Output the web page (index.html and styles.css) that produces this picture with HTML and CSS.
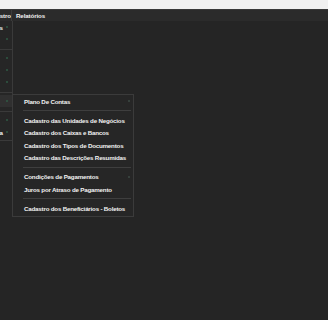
FILE: index.html
```html
<!DOCTYPE html>
<html lang="pt">
<head>
<meta charset="utf-8">
<link rel="stylesheet" href="styles.css">
</head>
<body>
<div class="topbar"></div>
<nav class="menubar">
  <div class="mitem clip"><span>Cadastro</span></div>
  <div class="mitem">Relatórios</div>
</nav>
<div class="workspace">
  <div class="dropdown">
    <div class="drow"><span class="dtext">Cadastros</span><span class="arr"></span></div>
    <div class="drow"><span class="dtext"></span><span class="arr"></span></div>
    <div class="dsep"></div>
    <div class="drow"><span class="dtext"></span><span class="arr"></span></div>
    <div class="drow"><span class="dtext"></span><span class="arr"></span></div>
    <div class="drow"><span class="dtext"></span><span class="arr"></span></div>
    <div class="dsep"></div>
    <div class="drow active"><span class="dtext"></span><span class="arr"></span></div>
    <div class="dsep"></div>
    <div class="drow"><span class="dtext"></span><span class="arr"></span></div>
    <div class="drow"><span class="dtext">Financeira</span><span class="arr"></span></div>
  </div>
  <div class="submenu">
    <div class="srow"><span>Plano De Contas</span><span class="sarr"></span></div>
    <div class="ssep"></div>
    <div class="srow"><span>Cadastro das Unidades de Negócios</span></div>
    <div class="srow"><span>Cadastro dos Caixas e Bancos</span></div>
    <div class="srow"><span>Cadastro dos Tipos de Documentos</span></div>
    <div class="srow"><span>Cadastro das Descrições Resumidas</span></div>
    <div class="ssep"></div>
    <div class="srow"><span>Condições de Pagamentos</span><span class="sarr"></span></div>
    <div class="srow"><span>Juros por Atraso de Pagamento</span></div>
    <div class="ssep"></div>
    <div class="srow"><span>Cadastro dos Beneficiários - Boletos</span></div>
  </div>
</div>
</body>
</html>
```
FILE: styles.css
```css
html, body {
  margin: 0;
  padding: 0;
}
body {
  width: 328px;
  height: 320px;
  background: #252525;
  font-family: "Liberation Sans", Arial, sans-serif;
  font-weight: bold;
  color: #f2f2f2;
  overflow: hidden;
}
.topbar {
  height: 9px;
  background: #f1f1f1;
}
.menubar {
  height: 11px;
  background: #2b2b2b;
  border-top: 1px solid #3a3a3a;
  display: flex;
  align-items: center;
  font-size: 6.2px;
  letter-spacing: -0.12px;
}
.mitem {
  padding: 0 3px;
  height: 11px;
  line-height: 11px;
}
.mitem.clip {
  width: 11px;
  padding: 0;
  display: flex;
  justify-content: flex-end;
  overflow: hidden;
  border-right: 1px solid #3c3c3c;
  margin-right: 1px;
}
.workspace {
  position: relative;
  height: 299px;
}
.dropdown {
  position: absolute;
  left: 0;
  top: 0;
  width: 12px;
  padding: 0 0 2px;
  background: #262626;
  border-right: 1px solid #3a3a3a;
  border-bottom: 1px solid #3a3a3a;
  font-size: 6.2px;
}
.drow {
  height: 12px;
  display: flex;
  align-items: center;
  justify-content: flex-end;
  overflow: hidden;
  position: relative;
}
.drow.active {
  background: #303030;
}
.dtext {
  position: absolute;
  right: 9px;
  white-space: nowrap;
}
.arr, .sarr {
  width: 2px;
  height: 2px;
  background: #2f5a45;
  border-radius: 1px;
  margin-right: 4px;
}
.dsep {
  height: 1px;
  background: #3a3a3a;
  margin: 4px 0 2px;
}
.submenu {
  position: absolute;
  left: 12px;
  top: 73px;
  width: 120px;
  padding: 0 0 1px;
  background: #262626;
  border: 1px solid #3b3b3b;
  font-size: 6.2px;
  letter-spacing: -0.2px;
}
.srow {
  height: 12.33px;
  display: flex;
  align-items: center;
  justify-content: space-between;
  padding-left: 11px;
  white-space: nowrap;
}
.sarr {
  margin-right: 3px;
  background: #3d4a44;
}
.ssep {
  height: 1px;
  background: #3e3e3e;
  margin: 3px 2px 3px 10px;
}
```
